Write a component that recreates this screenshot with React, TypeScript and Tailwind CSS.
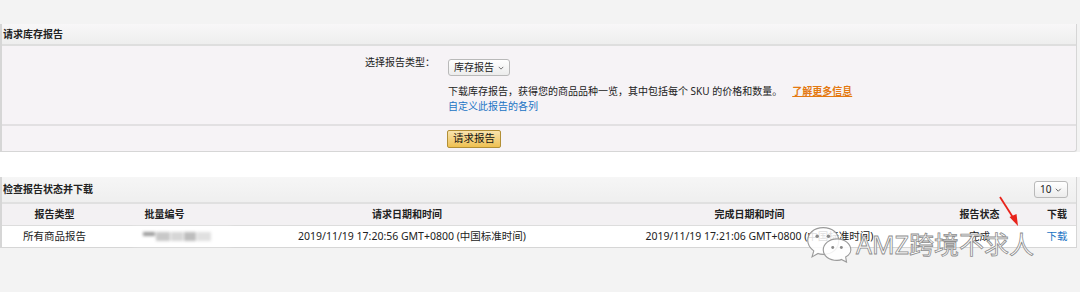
import React from 'react'

const font = { fontFamily: '"Noto Sans", "Noto Sans CJK SC", sans-serif' }

function Select({ label, className }: { label: string; className?: string }) {
  return (
    <div className={`inline-flex items-center justify-between gap-1 whitespace-nowrap h-[17px] px-[5px] border border-[#b9b9b9] rounded-[3px] bg-gradient-to-b from-white to-[#ececec] text-[10px] text-[#222] ${className ?? ''}`}>
      <span>{label}</span>
      <svg width="8" height="6" viewBox="0 0 8 6"><path d="M1 1.5 L4 4.5 L7 1.5" fill="none" stroke="#666" strokeWidth="1.2" /></svg>
    </div>
  )
}

function WeChat() {
  return (
    <svg width="50" height="38" viewBox="0 0 58 44">
      <g fill="#fff" fillOpacity="0.85" stroke="#9a9a9a" strokeWidth="1.3">
        <path d="M20 3 C9 3 2 10 2 18 C2 23 5 27 9 30 L7 37 L14 33 C16 34 18 34 20 34 C31 34 38 27 38 18 C38 10 31 3 20 3 Z" />
        <path d="M36 16 C27 16 20 22 20 29 C20 36 27 41 36 41 C38 41 40 41 41 40 L47 43 L46 37 C50 35 52 32 52 29 C52 22 45 16 36 16 Z" />
      </g>
      <g fill="#8a8a8a">
        <circle cx="13" cy="13" r="2" />
        <circle cx="26" cy="13" r="2" />
        <circle cx="31" cy="26" r="1.7" />
        <circle cx="41" cy="26" r="1.7" />
      </g>
    </svg>
  )
}

export default function App() {
  return (
    <div className="relative w-[1080px] h-[292px] bg-[#f3f3f3] overflow-hidden text-[#222]" style={font}>
      <div className="h-6" />

      {/* request panel */}
      <div className="w-[1077px] border-l-2 border-r border-b border-[#d6d6d6] rounded-br-[3px] bg-[#f6f3f6]">
        <div className="h-[22px] flex items-center pl-[1px] text-[10px] font-bold bg-gradient-to-b from-[#f8f7f8] to-[#eeeeee] border-b-2 border-[#dedede]">
          请求库存报告
        </div>
        <div className="h-[78px] flex pt-[7px]">
          <div className="w-[433px] text-right text-[10px] pt-[2px]">选择报告类型：</div>
          <div className="pl-[13px]">
            <Select label="库存报告" className="w-[62px]" />
            <div className="mt-[7px] text-[10px] leading-[15px]">
              下载库存报告，获得您的商品品种一览，其中包括每个 SKU 的价格和数量。
              <a className="ml-[10px] font-bold underline text-[#e47911]">了解更多信息</a>
            </div>
            <div className="text-[10px] leading-[15px] text-[#1a73c4]">自定义此报告的各列</div>
          </div>
        </div>
        <div className="h-[27px] flex items-center border-t-2 border-[#e2e0e2] pl-[445px]">
          <button className="h-[18px] px-[5px] text-[10.5px] rounded-[2px] border border-[#b28f36] bg-gradient-to-b from-[#f8e3ad] to-[#efc14f] text-[#111]">
            请求报告
          </button>
        </div>
      </div>

      <div className="h-[25px] bg-white" />

      {/* status panel */}
      <div className="w-[1077px] border-l-2 border-r border-b border-[#d6d6d6] bg-white">
        <div className="h-[27px] flex items-center justify-between pl-[1px] pr-[8px] bg-gradient-to-b from-[#f6f6f6] to-[#efefef] border-b-2 border-[#e0e0e0]">
          <span className="text-[10px] font-bold">检查报告状态并下载</span>
          <Select label="10" className="w-[34px]" />
        </div>
        <div className="h-[22px] grid grid-cols-[105px_115px_380px_315px_115px_1fr] items-center text-center text-[10px] font-bold bg-[#f3f1f3] border-b border-[#dddddd]">
          <span>报告类型</span>
          <span>批量编号</span>
          <span className="pr-[10px]">请求日期和时间</span>
          <span className="pr-[20px]">完成日期和时间</span>
          <span className="pl-[10px]">报告状态</span>
          <span className="pl-[6px]">下载</span>
        </div>
        <div className="h-[21px] grid grid-cols-[105px_115px_380px_315px_115px_1fr] items-center text-center text-[10.5px]">
          <span>所有商品报告</span>
          <span className="relative h-full">
            <span className="absolute left-[20px] top-[2px] w-[110px] h-[17px] rounded-full bg-white blur-[2px]" />
            <span className="absolute left-[36px] top-[6px] flex gap-[1px] blur-[1.5px]">
              <span className="w-[12px] h-[4px] bg-[#9a9a9a]" />
              <span className="w-[14px] h-[9px] bg-[#c8c8c8]" />
              <span className="w-[12px] h-[9px] bg-[#d6d6d6]" />
              <span className="w-[12px] h-[9px] bg-[#bdbdbd]" />
              <span className="w-[14px] h-[9px] bg-[#e0e0e0]" />
            </span>
          </span>
          <span>2019/11/19 17:20:56 GMT+0800 (中国标准时间)</span>
          <span>2019/11/19 17:21:06 GMT+0800 (中国标准时间)</span>
          <span className="pl-[10px]">完成</span>
          <a className="pl-[6px] text-[#1a73c4]">下载</a>
        </div>
      </div>

      {/* watermark overlay */}
      <div className="absolute left-[806px] top-[225px] flex items-center gap-0 pointer-events-none">
        <WeChat />
        <span
          className="text-[25px] leading-none text-white"
          style={{ WebkitTextStroke: '0.8px #8c8c8c', fontFamily: '"Noto Sans", "Noto Sans CJK SC", sans-serif' }}
        >
          AMZ跨境不求人
        </span>
      </div>

      {/* red arrow */}
      <svg className="absolute left-[995px] top-[194px]" width="30" height="36" viewBox="0 0 30 36">
        <path d="M5 3 L19 25" stroke="#e8231b" strokeWidth="1.8" fill="none" />
        <path d="M14.5 23 L23 32 L21.5 20 Z" fill="#e8231b" />
      </svg>
    </div>
  )
}
